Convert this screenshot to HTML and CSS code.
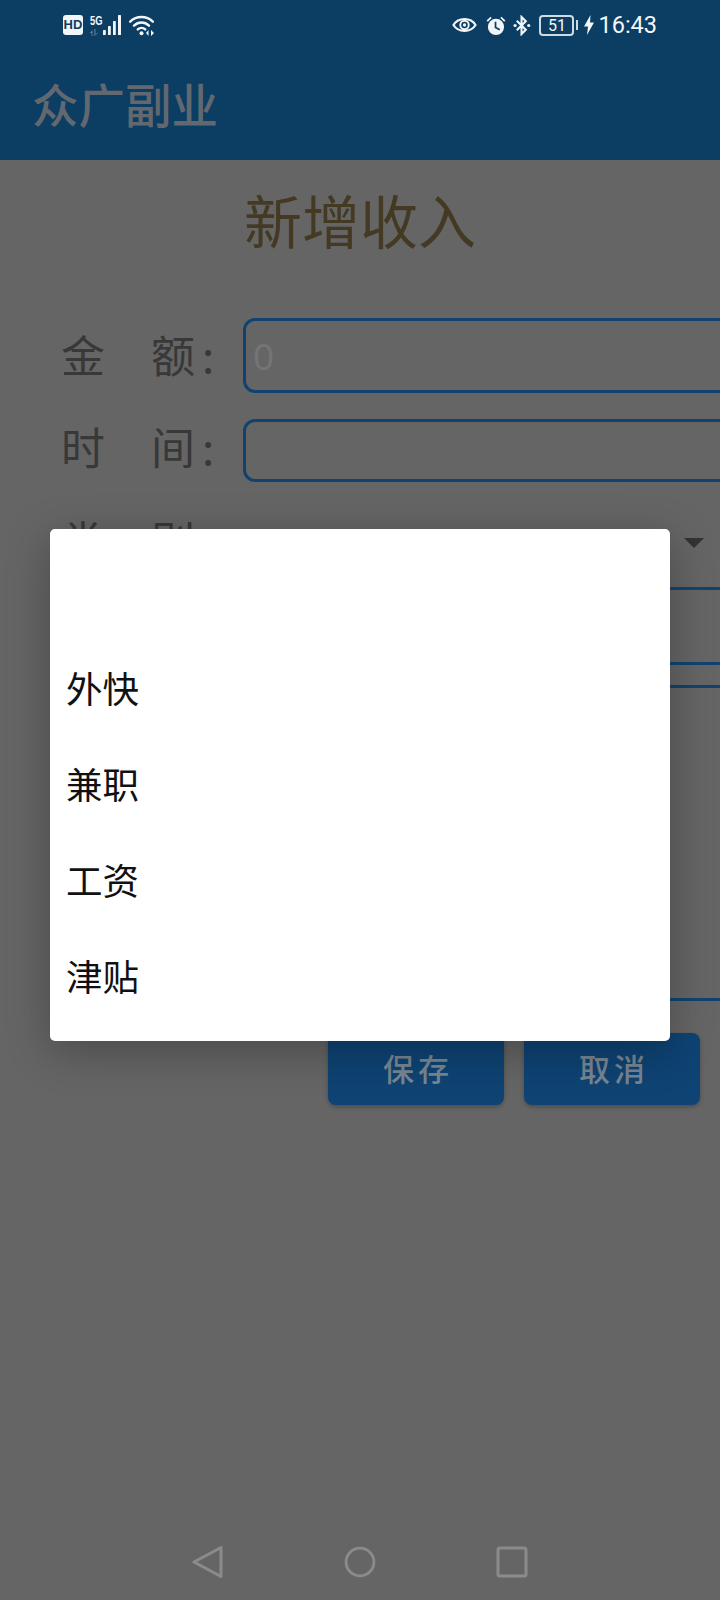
FILE: index.html
```html
<!DOCTYPE html>
<html lang="zh-CN">
<head>
<meta charset="utf-8">
<title>众广副业</title>
<link rel="stylesheet" href="styles.css">
</head>
<body>
<div class="screen">
  <header class="appbar">
    <div class="status">
      <div class="status-left">
        <span class="hd">HD</span>
        <div class="net">
          <span class="fiveg">5G</span>
          <svg class="updown" viewBox="0 0 10 7"><path d="M0 4 2.400 1V7H1.600V4ZM4.400 0H5.400V6L7.800 3.500V4.500L4.400 7Z" fill="#6f8ba3"/></svg>
        </div>
        <svg class="signal" viewBox="0 0 22 20"><g fill="#f2f6f9"><rect x="1" y="15" width="2.800" height="5" rx=".6"/><rect x="6" y="11" width="2.800" height="9" rx=".6"/><rect x="11" y="6" width="2.800" height="14" rx=".6"/><rect x="16" y="0" width="3" height="20" rx=".6"/></g></svg>
        <svg class="wifi" viewBox="0 0 26 21"><g fill="none" stroke="#f2f6f9" stroke-width="2.500" stroke-linecap="round"><path d="M1.200 6.600C7.500 .6 17.500 .6 23.800 6.600"/><path d="M5 10.600C9.400 6.400 15.600 6.400 20 10.600"/><path d="M8.800 14.400C10.900 12.400 14.100 12.400 16.200 14.400"/></g><circle cx="12.500" cy="18.200" r="2" fill="#f2f6f9"/><path d="M19.500 15 17 18 19.500 21ZM22 15V21L25 18Z" fill="#f2f6f9"/></svg>
      </div>
      <div class="status-right">
        <svg class="eye" viewBox="0 0 26 18"><path d="M1.500 9C6.500 .8 19.500 .8 24.500 9 19.500 17.200 6.500 17.200 1.500 9Z" fill="none" stroke="#f2f6f9" stroke-width="2.200"/><circle cx="13" cy="9" r="4.400" fill="none" stroke="#f2f6f9" stroke-width="2"/><circle cx="13" cy="9" r="1.700" fill="#f2f6f9"/></svg>
        <svg class="alarm" viewBox="0 0 21 21"><circle cx="10.500" cy="12" r="8.500" fill="#f2f6f9"/><path d="M10 6.500V12.500L14.500 15" fill="none" stroke="#0c3d63" stroke-width="1.800"/><path d="M.6 5.200 4.800 1.200 6 2.500 1.900 6.600ZM20.400 5.200 16.200 1.200 15 2.500 19.100 6.600Z" fill="#f2f6f9"/></svg>
        <svg class="bt" viewBox="0 0 19 21"><path d="M4 5.500 13.500 15 9 19.500V1.500L13.500 6 4 15.500" fill="none" stroke="#f2f6f9" stroke-width="2.200"/><circle cx="2.200" cy="10.500" r="1.700" fill="#f2f6f9"/><circle cx="16.600" cy="10.500" r="1.700" fill="#f2f6f9"/></svg>
        <div class="battery"><span class="battery-level">51</span></div>
        <span class="nub"></span>
        <svg class="bolt" viewBox="0 0 10 20"><path d="M6.500 0 0 11.500H4L3 20 10 7.500H6Z" fill="#f2f6f9"/></svg>
        <span class="clock">16:43</span>
      </div>
    </div>
    <div class="appname">众广副业</div>
  </header>

  <main class="form">
    <h1 class="page-title">新增收入</h1>
    <div class="row row-amount">
      <label class="label">金　额<span class="colon">:</span></label>
      <div class="input"><span class="placeholder">0</span></div>
    </div>
    <div class="row row-time">
      <label class="label">时　间<span class="colon">:</span></label>
      <div class="input"></div>
    </div>
    <div class="row row-type">
      <label class="label">类　别<span class="colon">:</span></label>
      <div class="spinner"><span class="caret"></span></div>
    </div>
    <div class="row row-line">
      <div class="underline"></div>
    </div>
    <div class="row row-note">
      <div class="notebox"></div>
    </div>
    <div class="actions">
      <button class="btn">保存</button>
      <button class="btn">取消</button>
    </div>
  </main>

  <nav class="navbar">
    <svg class="nav-icon" viewBox="0 0 32 34"><path d="M29 2.500V31.500L2 17Z" fill="none" stroke="#8b8b8b" stroke-width="3" stroke-linejoin="round"/></svg>
    <svg class="nav-icon" viewBox="0 0 34 34"><circle cx="17" cy="17" r="14.800" fill="none" stroke="#8b8b8b" stroke-width="3"/></svg>
    <svg class="nav-icon" viewBox="0 0 32 32"><rect x="2" y="2" width="28" height="28" rx="2" fill="none" stroke="#8b8b8b" stroke-width="3"/></svg>
  </nav>

  <div class="dialog">
    <ul class="options">
      <li class="option"></li>
      <li class="option">外快</li>
      <li class="option">兼职</li>
      <li class="option">工资</li>
      <li class="option">津贴</li>
    </ul>
  </div>
</div>
</body>
</html>
```

FILE: styles.css
```css
* { box-sizing: border-box; }
html, body { margin: 0; padding: 0; }
body {
  width: 720px;
  height: 1600px;
  overflow: hidden;
  background: #666;
  font-family: "Noto Sans CJK SC", "Noto Sans", sans-serif;
}
.screen {
  position: relative;
  width: 720px;
  height: 1600px;
  display: flex;
  flex-direction: column;
  overflow: hidden;
  background: #656565;
}

/* app bar */
.appbar { height: 160px; background: #0c3d63; flex: none; }
.status {
  height: 50px;
  padding: 0 63px 0 63px;
  display: flex;
  justify-content: space-between;
  align-items: center;
  color: #f2f6f9;
}
.status-left, .status-right { display: flex; align-items: center; }
.hd {
  width: 20px;
  height: 20px;
  border-radius: 3px;
  background: #f2f6f9;
  color: #0c3d63;
  font: 700 13px/20px "Liberation Sans", sans-serif;
  text-align: center;
}
.net {
  width: 11px;
  margin-left: 7px;
  display: flex;
  flex-direction: column;
  align-items: flex-start;
}
.fiveg {
  font: 700 13px/13px "Liberation Sans", sans-serif;
  white-space: nowrap;
  transform: scaleX(.72);
  transform-origin: left;
}
.updown { width: 10px; height: 7px; margin-top: 2px; }
.signal { width: 22px; height: 20px; margin-left: 1px; }
.wifi { width: 26px; height: 21px; margin-left: 5px; }
.eye { width: 25px; height: 18px; }
.alarm { width: 20px; height: 21px; margin-left: 9px; }
.bt { width: 18px; height: 21px; margin-left: 7px; }
.battery {
  width: 35px;
  height: 21px;
  margin-left: 8px;
  border: 2px solid #cfdbe4;
  border-radius: 4px;
  display: flex;
  align-items: center;
  justify-content: center;
}
.battery-level { font: 400 16px/17px Roboto, sans-serif; color: #f2f6f9; }
.nub { width: 2px; height: 10px; margin-left: 2px; background: #cfdbe4; }
.bolt { width: 10px; height: 20px; margin-left: 6px; }
.clock { margin-left: 4px; font: 400 23.500px/26px Roboto, sans-serif; color: #f2f6f9; }
.appname {
  height: 110px;
  padding-left: 32px;
  font-size: 46.500px;
  font-weight: 500;
  line-height: 106px;
  color: #626870;
}

/* form */
.form { flex: 1; display: flex; flex-direction: column; min-height: 0; }
.page-title {
  margin: 0;
  height: 158px;
  padding-top: 19px;
  text-align: center;
  font-size: 58px;
  font-weight: 400;
  line-height: 80px;
  color: #443a24;
}
.row { display: flex; align-items: center; padding-left: 61px; flex: none; }
.row-amount { height: 75px; }
.row-time { height: 63px; margin-top: 26px; }
.row-type { height: 108px; }
.row-line { height: 75px; }
.row-note { height: 316px; margin-top: 20px; }
.label {
  width: 182px;
  flex: none;
  font-size: 44px;
  letter-spacing: 1px;
  line-height: 60px;
  color: #383838;
  white-space: nowrap;
}
.row-amount .label { margin-bottom: 4px; }
.row-time .label { margin-bottom: 10px; }
.row-type .label { margin-top: 8px; }
.colon { margin-left: 6px; }
.input {
  flex: none;
  width: 520px;
  height: 100%;
  padding-left: 7px;
  border: 3px solid #124370;
  border-radius: 12px;
  display: flex;
  align-items: center;
}
.placeholder { font: 400 37px/1 "Noto Sans", sans-serif; color: #747474; }
.spinner {
  flex: 1;
  align-self: stretch;
  border-bottom: 3px solid #124370;
  display: flex;
  align-items: center;
  justify-content: flex-end;
  padding-right: 16px;
}
.caret {
  width: 0;
  height: 0;
  margin-top: 16px;
  border-left: 10px solid transparent;
  border-right: 10px solid transparent;
  border-top: 10px solid #333;
}
.underline { margin-left: 182px; flex: 1; align-self: stretch; border-bottom: 3px solid #124370; }
.notebox {
  margin-left: 182px;
  flex: 1;
  align-self: stretch;
  border-top: 3px solid #124370;
  border-bottom: 3px solid #124370;
}
.actions { display: flex; justify-content: flex-end; gap: 20px; padding: 32px 20px 0 0; }
.btn {
  width: 176px;
  height: 72px;
  border: 0;
  border-radius: 8px;
  background: #0e4373;
  box-shadow: 0 2px 4px rgba(0, 0, 0, .25);
  color: #788591;
  font-family: inherit;
  font-size: 31px;
  font-weight: 500;
  letter-spacing: 4px;
  padding: 0 0 4px 4px;
}

/* nav */
.navbar {
  height: 80px;
  flex: none;
  display: flex;
  align-items: flex-start;
  justify-content: space-between;
  padding: 25px 192px 0 192px;
}
.nav-icon { width: 32px; height: 34px; }

/* dialog */
.dialog {
  position: absolute;
  left: 50px;
  top: 529px;
  width: 620px;
  height: 512px;
  padding: 15px 0;
  background: #fff;
  border-radius: 5px;
  box-shadow: 0 10px 44px rgba(0, 0, 0, .28);
}
.options { list-style: none; margin: 0; padding: 0; }
.option {
  height: 96px;
  padding-left: 16px;
  font-size: 36.500px;
  line-height: 96px;
  color: #111;
}
```
